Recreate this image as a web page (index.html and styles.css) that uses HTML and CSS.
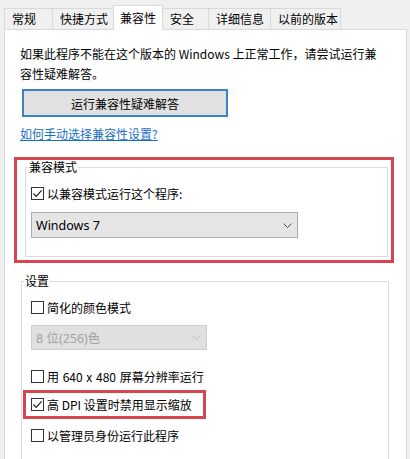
FILE: index.html
```html
<!DOCTYPE html>
<html lang="zh-CN">
<head>
<meta charset="utf-8">
<title>兼容性</title>
<link rel="stylesheet" href="styles.css">
</head>
<body>
<div class="tabs">
  <div class="tab t1">常规</div>
  <div class="tab t2">快捷方式</div>
  <div class="tab t3 active">兼容性</div>
  <div class="tab t4">安全</div>
  <div class="tab t5">详细信息</div>
  <div class="tab t6">以前的版本</div>
</div>
<div class="panel">
  <p class="intro">如果此程序不能在这个版本的 Windows 上正常工作，请尝试运行兼<br>容性疑难解答。</p>
  <button class="btn" type="button">运行兼容性疑难解答</button>
  <a class="link" href="#">如何手动选择兼容性设置?</a>

  <div class="highlight hl-mode">
    <fieldset class="group">
      <legend>兼容模式</legend>
      <div class="group-body mode-body">
        <div class="check-row">
          <span class="box"><svg width="11" height="11" viewBox="0 0 11 11"><path d="M1.5 5.5 L4.2 8.3 L9.6 2.4" fill="none" stroke="#222" stroke-width="1.2"/></svg></span>
          <span>以兼容模式运行这个程序:</span>
        </div>
        <div class="select select-os">
          <span class="select-text">Windows 7</span>
          <svg class="chev" width="9" height="5" viewBox="0 0 9 5"><path d="M0.5 0.5 L4.5 4.5 L8.5 0.5" fill="none" stroke="#444" stroke-width="1"/></svg>
        </div>
      </div>
    </fieldset>
  </div>

  <fieldset class="group group-settings">
    <legend>设置</legend>
    <div class="group-body settings-body">
      <div class="check-row first">
        <span class="box"></span>
        <span>简化的颜色模式</span>
      </div>
      <div class="select select-color disabled">
        <span class="select-text">8 位(256)色</span>
        <svg class="chev" width="9" height="5" viewBox="0 0 9 5"><path d="M0.5 0.5 L4.5 4.5 L8.5 0.5" fill="none" stroke="#bdbdbd" stroke-width="1"/></svg>
      </div>
      <div class="check-row res">
        <span class="box"></span>
        <span>用 640 x 480 屏幕分辨率运行</span>
      </div>
      <div class="highlight hl-dpi">
        <div class="check-row">
          <span class="box"><svg width="11" height="11" viewBox="0 0 11 11"><path d="M1.5 5.5 L4.2 8.3 L9.6 2.4" fill="none" stroke="#222" stroke-width="1.2"/></svg></span>
          <span>高 DPI 设置时禁用显示缩放</span>
        </div>
      </div>
      <div class="check-row admin">
        <span class="box"></span>
        <span>以管理员身份运行此程序</span>
      </div>
    </div>
  </fieldset>
</div>
</body>
</html>
```
FILE: styles.css
```css
* { box-sizing: border-box; }
html, body { margin: 0; height: 459px; overflow: hidden; }
body {
  background: #f0f0f0;
  font-family: "Noto Sans CJK SC", "Noto Sans", sans-serif;
  font-size: 12px;
  color: #000;
}

.tabs {
  display: flex;
  align-items: flex-end;
  height: 29px;
  padding-left: 4px;
}
.tab {
  height: 21px;
  border: 1px solid #d9d9d9;
  border-bottom: none;
  background: #f0f0f0;
  margin-left: -1px;
  display: flex;
  align-items: center;
  padding-left: 7px;
  line-height: 1;
}
.tab:first-child { margin-left: 0; }
.t1 { width: 49px; }
.t2 { width: 62px; }
.t3 { width: 50px; padding-left: 6px; }
.t4 { width: 47px; }
.t5 { width: 63px; }
.t6 { width: 71px; }
.tab.active {
  height: 25px;
  background: #fff;
  margin-bottom: -1px;
  position: relative;
  z-index: 1;
}

.panel {
  margin-left: 4px;
  width: 403px;
  height: 430px;
  overflow: hidden;
  background: #fff;
  border: 1px solid #d9d9d9;
  border-bottom: none;
  padding-left: 15px;
}

.intro {
  margin: 14px 0 0;
  line-height: 20px;
}
.btn {
  display: block;
  margin: 5px 0 0 2px;
  width: 206px;
  height: 28px;
  padding: 0;
  border: 2px solid #3d82c2;
  background: #e1e1e1;
  font: inherit;
  color: #000;
}
.link {
  display: block;
  width: fit-content;
  margin-top: 7px;
  line-height: 20px;
  color: #1a6fc4;
  text-decoration: underline;
}

.highlight {
  border: 3px solid #d64550;
}
.hl-mode {
  margin: 13px 0 0 -6px;
  width: 380px;
  padding: 0 3px 3px 8px;
}

.group {
  margin: 0;
  padding: 0;
  border: 1px solid #dcdcdc;
  min-width: 0;
}
.group legend {
  margin-left: 2px;
  padding: 0 1px;
  line-height: 14px;
}
.mode-body { padding: 0 0 18px 5px; }

.check-row {
  display: flex;
  align-items: center;
  gap: 3px;
  height: 20px;
  margin-top: 9px;
  white-space: nowrap;
}
.box {
  width: 13px;
  height: 13px;
  border: 1px solid #333;
  background: #fff;
  display: flex;
  align-items: center;
  justify-content: center;
  flex: none;
}

.select {
  display: flex;
  align-items: center;
  justify-content: space-between;
  border: 1px solid #adadad;
  background: #e5e5e5;
  padding: 0 5px 0 4px;
  font-family: "Noto Sans", "Noto Sans CJK SC", sans-serif;
  font-size: 12.5px;
}
.select-os {
  margin-top: 9px;
  width: 267px;
  height: 26px;
}
.select-color {
  margin-top: 8px;
  width: 176px;
  height: 25px;
}
.select.disabled {
  background: #e0e0e0;
  border-color: #cfcfcf;
  color: #a3a3a3;
}

.group-settings {
  margin: 11px 0 0 1px;
  width: 368px;
}
.settings-body { padding: 0 0 60px 9px; }
.settings-body .res { margin-top: 16px; word-spacing: 1px; }
.hl-dpi {
  margin: 4px 0 0 -8px;
  width: 183px;
  padding: 1px 0 2px 5px;
}
.hl-dpi .check-row { margin-top: 0; }
.settings-body .admin { margin-top: 6px; }
```
